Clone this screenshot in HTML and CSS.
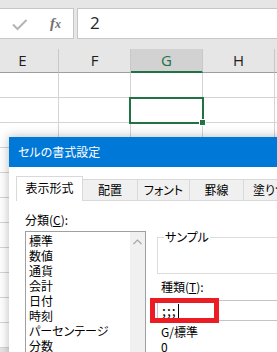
FILE: index.html
```html
<!DOCTYPE html>
<html lang="ja">
<head>
    <meta charset="UTF-8">
    <meta name="viewport" content="width=device-width, initial-scale=1.0">
    <title>セルの書式設定</title>
    <link rel="stylesheet" href="styles.css">
</head>
<body>
    <div class="formula-bar">
        <div class="fx-box">
            <svg class="check" width="16" height="12" viewBox="0 0 16 12">
                <polyline points="1,5.5 5.5,10 14.5,1" fill="none" stroke="#b4b4b4" stroke-width="2"/>
            </svg>
            <span class="fx">f<span class="fx-x">x</span></span>
        </div>
        <div class="formula-input">2</div>
    </div>

    <div class="sheet">
        <div class="col-head">E</div>
        <div class="col-head">F</div>
        <div class="col-head selected">G</div>
        <div class="col-head">H</div>
        <div class="col-head"></div>

        <div class="cell"></div><div class="cell"></div><div class="cell"></div><div class="cell"></div><div class="cell"></div>
        <div class="cell"></div><div class="cell"></div><div class="cell active"></div><div class="cell"></div><div class="cell"></div>
        <div class="cell"></div><div class="cell"></div><div class="cell"></div><div class="cell"></div><div class="cell"></div>
        <div class="cell"></div><div class="cell"></div><div class="cell"></div><div class="cell"></div><div class="cell"></div>
        <div class="cell"></div><div class="cell"></div><div class="cell"></div><div class="cell"></div><div class="cell"></div>
        <div class="cell"></div><div class="cell"></div><div class="cell"></div><div class="cell"></div><div class="cell"></div>
        <div class="cell"></div><div class="cell"></div><div class="cell"></div><div class="cell"></div><div class="cell"></div>
        <div class="cell"></div><div class="cell"></div><div class="cell"></div><div class="cell"></div><div class="cell"></div>
        <div class="cell"></div><div class="cell"></div><div class="cell"></div><div class="cell"></div><div class="cell"></div>
        <div class="cell"></div><div class="cell"></div><div class="cell"></div><div class="cell"></div><div class="cell"></div>
        <div class="cell"></div><div class="cell"></div><div class="cell"></div><div class="cell"></div><div class="cell"></div>
    </div>

    <div class="dialog">
        <div class="dialog-title">セルの書式設定</div>
        <div class="dialog-body">
            <div class="tabs">
                <div class="tab active">表示形式</div>
                <div class="tab tab-2">配置</div>
                <div class="tab tab-3">フォント</div>
                <div class="tab tab-4">罫線</div>
                <div class="tab tab-5">塗りつぶし</div>
            </div>
            <div class="tab-page">
                <div class="category">
                    <div class="label">分類(<u>C</u>):</div>
                    <div class="listbox">
                        <div class="list-items">
                            <div>標準</div>
                            <div>数値</div>
                            <div>通貨</div>
                            <div>会計</div>
                            <div>日付</div>
                            <div>時刻</div>
                            <div>パーセンテージ</div>
                            <div>分数</div>
                        </div>
                        <div class="scrollbar">
                            <svg width="9" height="6" viewBox="0 0 9 6">
                                <polyline points="0.5,5 4.5,1 8.5,5" fill="none" stroke="#a6a6a6" stroke-width="1.2"/>
                            </svg>
                        </div>
                    </div>
                </div>
                <div class="format">
                    <div class="sample">
                        <span class="sample-label">サンプル</span>
                    </div>
                    <div class="label type-label">種類(<u>T</u>):</div>
                    <div class="type-input">;;;<span class="caret"></span></div>
                    <div class="type-list">
                        <div>G/標準</div>
                        <div>0</div>
                        <div>0.00</div>
                    </div>
                </div>
            </div>
        </div>
    </div>

    <div class="highlight"></div>
</body>
</html>
```

FILE: styles.css
```css
html,
body {
    margin: 0;
    width: 277px;
    height: 352px;
    overflow: hidden;
    background-color: #E6E6E6;
    font-family: "Noto Sans CJK JP", sans-serif;
    font-feature-settings: "palt";
    position: relative;
}

.formula-bar {
    display: flex;
    height: 49px;
    padding-top: 8px;
    box-sizing: border-box;
}

.fx-box {
    width: 74px;
    height: 31px;
    background-color: #FFF;
    border: 1px solid #C6C6C6;
    border-left: none;
    box-sizing: border-box;
    display: flex;
    align-items: center;
    padding-left: 12px;
}

.check {
    margin-top: 2px;
}

.fx {
    margin-left: 22px;
    font-family: "Liberation Serif", serif;
    font-style: italic;
    font-weight: bold;
    font-size: 15px;
    color: #707070;
}

.fx-x {
    font-size: 12px;
}

.formula-input {
    flex: 1;
    margin-left: 3px;
    height: 31px;
    background-color: #FFF;
    border: 1px solid #C6C6C6;
    border-right: none;
    box-sizing: border-box;
    padding-left: 12px;
    font-family: "Open Sans", sans-serif;
    font-size: 17px;
    line-height: 28px;
    color: #262626;
}

.sheet {
    display: grid;
    grid-template-columns: repeat(5, 72px);
    margin-left: -13px;
    background-color: #FFF;
}

.col-head {
    height: 24px;
    background-color: #E6E6E6;
    border-right: 1px solid #C8C8C8;
    border-bottom: 1px solid #9E9E9E;
    box-sizing: border-box;
    text-align: center;
    font-family: "Open Sans", sans-serif;
    font-size: 15px;
    line-height: 23px;
    color: #1E1E1E;
}

.col-head.selected {
    background-color: #D2D2D2;
    border-bottom: 2px solid #217346;
    color: #217346;
    line-height: 22px;
}

.cell {
    height: 25px;
    border-right: 1px solid #D4D4D4;
    border-bottom: 1px solid #D4D4D4;
    box-sizing: border-box;
}

.cell.active {
    position: relative;
}

.cell.active::after {
    content: "";
    position: absolute;
    left: -2px;
    top: -1px;
    width: 75px;
    height: 27px;
    border: 2px solid #217346;
    box-sizing: border-box;
}

.cell.active::before {
    content: "";
    position: absolute;
    z-index: 1;
    left: 68px;
    top: 21px;
    width: 5px;
    height: 5px;
    background-color: #217346;
    border: 1px solid #FFF;
}

.dialog {
    position: absolute;
    left: 9px;
    top: 137px;
    width: 420px;
    height: 320px;
    background-color: #FFF;
    box-shadow: 0 0 10px rgba(0, 0, 0, 0.28);
}

.dialog-title {
    height: 30px;
    background-color: #0078D7;
    color: #FFF;
    font-size: 12px;
    line-height: 30px;
    padding-left: 9px;
}

.dialog-body {
    padding-top: 9px;
}

.tabs {
    display: flex;
    align-items: flex-end;
    height: 24px;
    margin-left: 7px;
    border-bottom: 1px solid #D9D9D9;
    font-size: 12px;
}

.tab {
    height: 21px;
    background-color: #F0F0F0;
    border-top: 1px solid #D9D9D9;
    border-right: 1px solid #D9D9D9;
    box-sizing: border-box;
    text-align: center;
    line-height: 20px;
    color: #000;
}

.tab.active {
    width: 67px;
    height: 25px;
    margin-bottom: -1px;
    background-color: #FFF;
    border-left: 1px solid #D9D9D9;
    line-height: 22px;
}

.tab-2 {
    width: 55px;
}

.tab-3 {
    width: 52px;
}

.tab-4 {
    width: 54px;
}

.tab-5 {
    width: 80px;
    text-align: left;
    padding-left: 9px;
}

.tab-page {
    display: flex;
    gap: 11px;
    padding-top: 11px;
    padding-left: 16px;
    font-size: 12px;
}

.label {
    height: 16px;
    line-height: 16px;
}

.category {
    width: 121px;
}

.listbox {
    display: flex;
    margin-top: 3px;
    height: 140px;
    border: 1px solid #A0A0A0;
}

.list-items {
    flex: 1;
    padding-top: 1px;
    padding-left: 3px;
    line-height: 15px;
    white-space: nowrap;
}

.scrollbar {
    width: 15px;
    background-color: #F0F0F0;
    display: flex;
    justify-content: center;
    padding-top: 7px;
    box-sizing: border-box;
}

.format {
    flex: 1;
}

.sample {
    position: relative;
    margin-top: 25px;
    height: 35px;
    border: 1px solid #DCDCDC;
    border-right: none;
}

.sample-label {
    position: absolute;
    left: 6px;
    top: -9px;
    padding: 0 1px;
    background-color: #FFF;
    line-height: 16px;
}

.type-label {
    margin-top: 5px;
    padding-left: 4px;
}

.type-input {
    margin-top: 5px;
    height: 21px;
    border: 1px solid #C4C4C4;
    border-right: none;
    box-sizing: border-box;
    padding-left: 4px;
    font-size: 14px;
    letter-spacing: 1px;
    line-height: 19px;
    display: flex;
    align-items: center;
}

.caret {
    width: 1px;
    height: 14px;
    margin-left: 1px;
    background-color: #000;
}

.type-list {
    padding-top: 3px;
    padding-left: 4px;
    line-height: 15px;
}

.highlight {
    position: absolute;
    left: 150px;
    top: 298px;
    width: 69px;
    height: 25px;
    border: 5px solid #EC1C24;
    box-sizing: border-box;
}
```
